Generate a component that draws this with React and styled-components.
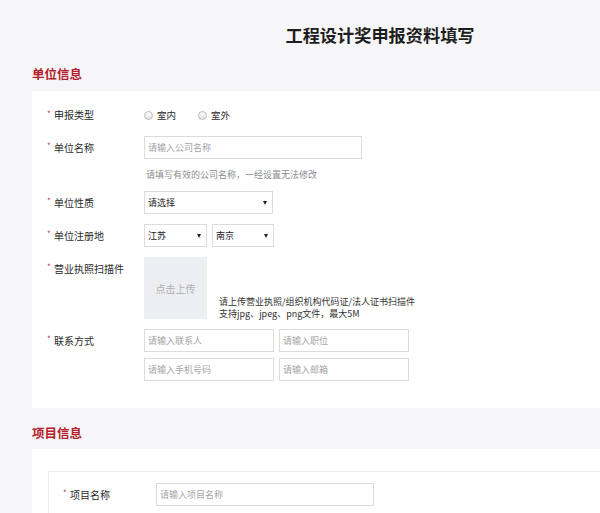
import styled, { createGlobalStyle } from 'styled-components';

const GlobalStyle = createGlobalStyle`
  html, body {
    margin: 0;
    padding: 0;
    background: #f6f6f8;
    overflow: hidden;
  }
  body {
    font-family: "Noto Sans CJK SC", "Liberation Sans", sans-serif;
    color: #333;
  }
`;

const Page = styled.div`
  width: 696px;
  margin-left: 32px;
  padding-top: 25px;
`;

const Title = styled.h1`
  margin: 0;
  text-align: center;
  font-size: 17.2px;
  line-height: 20px;
  font-weight: 700;
  color: #1e1e1e;
`;

const SectionTitle = styled.h2`
  margin: ${(p) => (p.$first ? '21px' : '17px')} 0 ${(p) => (p.$first ? '9px' : '8px')};
  font-size: 12.5px;
  line-height: 16px;
  font-weight: 700;
  color: #b3202b;
`;

const Card = styled.div`
  background: #fff;
  padding: 13px 15px 27px;
  display: flex;
  flex-direction: column;
  gap: 10px;
`;

const ProjectCard = styled.div`
  background: #fff;
  padding: 22px 0 0 16px;
  height: 80px;
`;

const InnerBox = styled.div`
  border: 1px solid #ececef;
  border-right: none;
  border-bottom: none;
  height: 100%;
  padding: 11px 0 0 14px;
`;

const Row = styled.div`
  display: flex;
  align-items: flex-start;
`;

const Label = styled.div`
  width: ${(p) => p.$width || 97}px;
  flex-shrink: 0;
  font-size: 10px;
  line-height: ${(p) => p.$lh || 23}px;
  color: #2a2a2a;
  display: flex;
  align-items: center;

  &::before {
    content: '*';
    color: #c0303a;
    font-size: 8px;
    width: 7px;
    line-height: 8px;
    margin-top: -3px;
  }
`;

const Control = styled.div`
  display: flex;
  flex-direction: column;
  gap: ${(p) => p.$gap || 0}px;
`;

const RadioGroup = styled.div`
  display: flex;
  align-items: center;
  height: 22px;
  gap: 22px;
`;

const Radio = styled.label`
  display: flex;
  align-items: center;
  gap: 4px;
  font-size: 9.5px;
  color: #2a2a2a;

  &::before {
    content: '';
    width: 7px;
    height: 7px;
    border-radius: 50%;
    border: 1px solid #b8b8b8;
    background: linear-gradient(#fdfdfd, #e4e4e4);
  }
`;

const Input = styled.input`
  box-sizing: border-box;
  width: ${(p) => p.$width || 130}px;
  height: 23px;
  border: 1px solid #dcdcdc;
  border-radius: 0;
  padding: 0 3px;
  font-family: inherit;
  font-size: 9px;
  outline: none;
  &::placeholder {
    color: #a5a5a5;
  }
`;

const Hint = styled.div`
  font-size: 9px;
  line-height: 12px;
  color: #8c8c8c;
  padding-left: 2px;
`;

const Select = styled.div`
  box-sizing: border-box;
  width: ${(p) => p.$width}px;
  height: 23px;
  border: 1px solid #dcdcdc;
  display: flex;
  align-items: center;
  justify-content: space-between;
  padding: 0 5px 0 3px;
  font-size: 9px;
  color: #222;

  &::after {
    content: '';
    border-left: 2px solid transparent;
    border-right: 2px solid transparent;
    border-top: 4px solid #222;
  }
`;

const Inline = styled.div`
  display: flex;
  gap: ${(p) => p.$gap}px;
  align-items: ${(p) => p.$align || 'flex-start'};
`;

const Upload = styled.div`
  width: 63px;
  height: 62px;
  background: #eceef1;
  color: #b0b0b0;
  font-size: 10px;
  display: flex;
  align-items: center;
  justify-content: center;
`;

const UploadTip = styled.div`
  font-size: 9px;
  line-height: 12px;
  color: #333;
  margin-bottom: -1px;
`;

const ContactGrid = styled.div`
  display: grid;
  grid-template-columns: 130px 130px;
  column-gap: 5px;
  row-gap: 6px;
`;

export default function App() {
  return (
    <Page>
      <GlobalStyle />
      <Title>工程设计奖申报资料填写</Title>

      <SectionTitle $first>单位信息</SectionTitle>
      <Card>
        <Row>
          <Label $lh={22}>申报类型</Label>
          <RadioGroup>
            <Radio>室内</Radio>
            <Radio>室外</Radio>
          </RadioGroup>
        </Row>
        <Row>
          <Label>单位名称</Label>
          <Control $gap={10}>
            <Input $width={218} placeholder="请输入公司名称" />
            <Hint>请填写有效的公司名称，一经设置无法修改</Hint>
          </Control>
        </Row>
        <Row>
          <Label>单位性质</Label>
          <Select $width={129}>请选择</Select>
        </Row>
        <Row>
          <Label>单位注册地</Label>
          <Inline $gap={5}>
            <Select $width={63}>江苏</Select>
            <Select $width={62}>南京</Select>
          </Inline>
        </Row>
        <Row>
          <Label>营业执照扫描件</Label>
          <Inline $gap={12} $align="flex-end">
            <Upload>点击上传</Upload>
            <UploadTip>
              请上传营业执照/组织机构代码证/法人证书扫描件
              <br />
              支持jpg、jpeg、png文件，最大5M
            </UploadTip>
          </Inline>
        </Row>
        <Row>
          <Label>联系方式</Label>
          <ContactGrid>
            <Input placeholder="请输入联系人" />
            <Input placeholder="请输入职位" />
            <Input placeholder="请输入手机号码" />
            <Input placeholder="请输入邮箱" />
          </ContactGrid>
        </Row>
      </Card>

      <SectionTitle>项目信息</SectionTitle>
      <ProjectCard>
        <InnerBox>
          <Row>
            <Label $width={93}>项目名称</Label>
            <Input $width={218} placeholder="请输入项目名称" />
          </Row>
        </InnerBox>
      </ProjectCard>
    </Page>
  );
}
